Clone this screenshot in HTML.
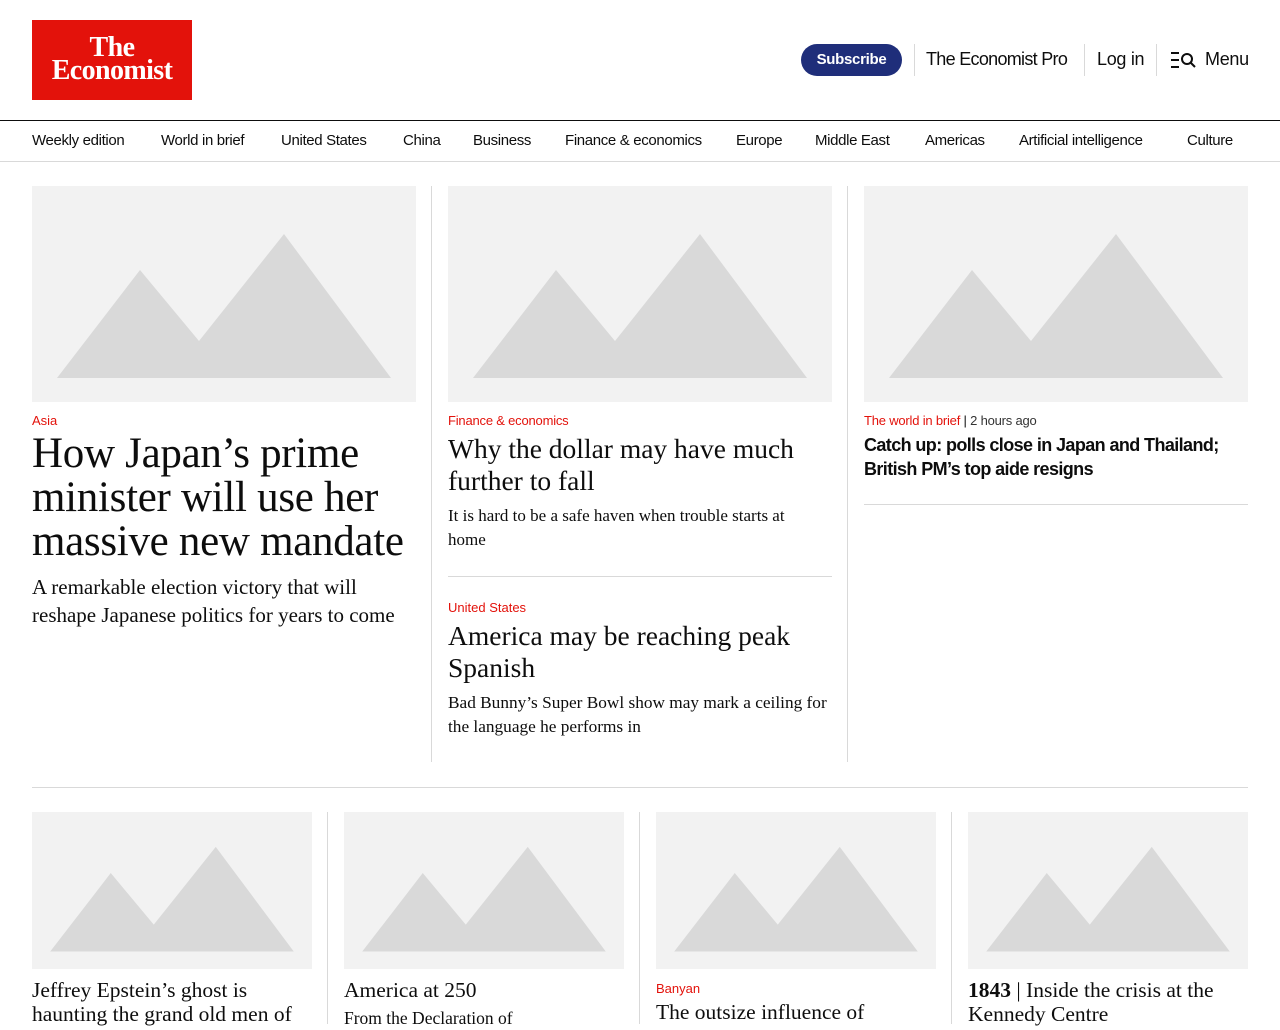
<!DOCTYPE html>
<html><head><meta charset="utf-8"><style>
*{margin:0;padding:0;box-sizing:border-box}
body{width:1280px;height:1024px;overflow:hidden;background:#fff;font-family:"Liberation Sans",sans-serif;color:#0d0d0d;position:relative}
.a{position:absolute;white-space:nowrap}
.serif{font-family:"Liberation Serif",serif}
.red{color:#e3120b}
.img{position:absolute;background:#f2f2f2}
.img svg{width:100%;height:100%;display:block}
.vl{position:absolute;width:1px;background:#d9d9d9}
.hl{position:absolute;height:1px;background:#d9d9d9}
.nav{position:absolute;top:132px;font-size:15px;letter-spacing:-0.35px;color:#0d0d0d}
.t{position:absolute;white-space:normal}
</style></head><body>
<div class="a" style="left:32px;top:20px;width:160px;height:80px;background:#e3120b;color:#fff;text-align:center;font-family:'Liberation Serif',serif;font-size:28px;font-weight:bold;line-height:23px;padding-top:16px;letter-spacing:-0.6px">The<br>Economist</div>
<div class="a" style="left:801px;top:44px;width:101px;height:32px;border-radius:16px;background:#1f2e7a;color:#fff;font-size:15px;font-weight:bold;text-align:center;line-height:32px;letter-spacing:-0.3px">Subscribe</div>
<div class="vl" style="left:914px;top:44px;height:32px"></div>
<div class="a" style="left:926px;top:49px;font-size:18px;letter-spacing:-0.7px">The Economist Pro</div>
<div class="vl" style="left:1084px;top:44px;height:32px"></div>
<div class="a" style="left:1097px;top:49px;font-size:18px;letter-spacing:-0.3px">Log in</div>
<div class="vl" style="left:1156px;top:44px;height:32px"></div>
<svg class="a" style="left:1170px;top:51px" width="28" height="18" viewBox="0 0 28 18"><g stroke="#0d0d0d" stroke-width="2" fill="none"><path d="M1 2h8M1 9h8M1 16h8"/><circle cx="17" cy="8" r="5"/><path d="M21 12l4 4"/></g></svg>
<div class="a" style="left:1205px;top:49px;font-size:18px;letter-spacing:-0.3px">Menu</div>
<div class="hl" style="left:0;top:120px;width:1280px;background:#0d0d0d"></div>
<div class="nav" style="left:32px">Weekly edition</div>
<div class="nav" style="left:161px">World in brief</div>
<div class="nav" style="left:281px">United States</div>
<div class="nav" style="left:403px">China</div>
<div class="nav" style="left:473px">Business</div>
<div class="nav" style="left:565px">Finance &amp; economics</div>
<div class="nav" style="left:736px">Europe</div>
<div class="nav" style="left:815px">Middle East</div>
<div class="nav" style="left:925px">Americas</div>
<div class="nav" style="left:1019px">Artificial intelligence</div>
<div class="nav" style="left:1187px">Culture</div>
<div class="hl" style="left:0;top:161px;width:1280px"></div>

<div class="img" style="left:32px;top:186px;width:384px;height:216px"><svg viewBox="0 0 384 216" preserveAspectRatio="none"><path d="M25 192L108 84L167 155L252 48L359 192Z" fill="#d9d9d9"/></svg></div>
<div class="img" style="left:448px;top:186px;width:384px;height:216px"><svg viewBox="0 0 384 216" preserveAspectRatio="none"><path d="M25 192L108 84L167 155L252 48L359 192Z" fill="#d9d9d9"/></svg></div>
<div class="img" style="left:864px;top:186px;width:384px;height:216px"><svg viewBox="0 0 384 216" preserveAspectRatio="none"><path d="M25 192L108 84L167 155L252 48L359 192Z" fill="#d9d9d9"/></svg></div>
<div class="vl" style="left:431px;top:186px;height:576px"></div>
<div class="vl" style="left:847px;top:186px;height:576px"></div>

<div class="a red" style="left:32px;top:413px;font-size:13px">Asia</div>
<div class="t serif" style="left:32px;top:432px;width:390px;font-size:43px;line-height:44px;letter-spacing:-0.3px">How Japan’s prime minister will use her massive new mandate</div>
<div class="t serif" style="left:32px;top:573px;width:384px;font-size:21px;line-height:28px">A remarkable election victory that will reshape Japanese politics for years to come</div>

<div class="a red" style="left:448px;top:413px;font-size:13px;letter-spacing:-0.2px">Finance &amp; economics</div>
<div class="t serif" style="left:448px;top:433px;width:384px;font-size:27.5px;line-height:32px">Why the dollar may have much further to fall</div>
<div class="t serif" style="left:448px;top:504px;width:365px;font-size:17px;line-height:24px">It is hard to be a safe haven when trouble starts at home</div>
<div class="hl" style="left:448px;top:576px;width:384px"></div>
<div class="a red" style="left:448px;top:600px;font-size:13px">United States</div>
<div class="t serif" style="left:448px;top:620px;width:384px;font-size:27.5px;line-height:32px">America may be reaching peak Spanish</div>
<div class="t serif" style="left:448px;top:691px;width:390px;font-size:17.3px;line-height:24px">Bad Bunny’s Super Bowl show may mark a ceiling for the language he performs in</div>

<div class="a" style="left:864px;top:413px;font-size:13px;letter-spacing:-0.2px"><span class="red">The world in brief</span> | <span style="color:#333">2 hours ago</span></div>
<div class="t" style="left:864px;top:433px;width:390px;font-size:18px;line-height:24px;font-weight:bold;letter-spacing:-0.6px">Catch up: polls close in Japan and Thailand; British PM’s top aide resigns</div>
<div class="hl" style="left:864px;top:504px;width:384px"></div>

<div class="hl" style="left:32px;top:787px;width:1216px"></div>

<div class="img" style="left:32px;top:812px;width:280px;height:157px"><svg viewBox="0 0 384 216" preserveAspectRatio="none"><path d="M25 192L108 84L167 155L252 48L359 192Z" fill="#d9d9d9"/></svg></div>
<div class="img" style="left:344px;top:812px;width:280px;height:157px"><svg viewBox="0 0 384 216" preserveAspectRatio="none"><path d="M25 192L108 84L167 155L252 48L359 192Z" fill="#d9d9d9"/></svg></div>
<div class="img" style="left:656px;top:812px;width:280px;height:157px"><svg viewBox="0 0 384 216" preserveAspectRatio="none"><path d="M25 192L108 84L167 155L252 48L359 192Z" fill="#d9d9d9"/></svg></div>
<div class="img" style="left:968px;top:812px;width:280px;height:157px"><svg viewBox="0 0 384 216" preserveAspectRatio="none"><path d="M25 192L108 84L167 155L252 48L359 192Z" fill="#d9d9d9"/></svg></div>
<div class="vl" style="left:327px;top:812px;height:212px"></div>
<div class="vl" style="left:639px;top:812px;height:212px"></div>
<div class="vl" style="left:951px;top:812px;height:212px"></div>

<div class="t serif" style="left:32px;top:978px;width:290px;font-size:21.5px;line-height:24px">Jeffrey Epstein’s ghost is haunting the grand old men of</div>
<div class="t serif" style="left:344px;top:978px;width:280px;font-size:21.5px;line-height:24px">America at 250</div>
<div class="t serif" style="left:344px;top:1006px;width:280px;font-size:17.5px;line-height:24px">From the Declaration of</div>
<div class="a red" style="left:656px;top:981px;font-size:13px">Banyan</div>
<div class="t serif" style="left:656px;top:1000px;width:280px;font-size:21.5px;line-height:24px">The outsize influence of</div>
<div class="t serif" style="left:968px;top:978px;width:280px;font-size:21.5px;line-height:24px"><b>1843</b> | Inside the crisis at the Kennedy Centre</div>
</body></html>
